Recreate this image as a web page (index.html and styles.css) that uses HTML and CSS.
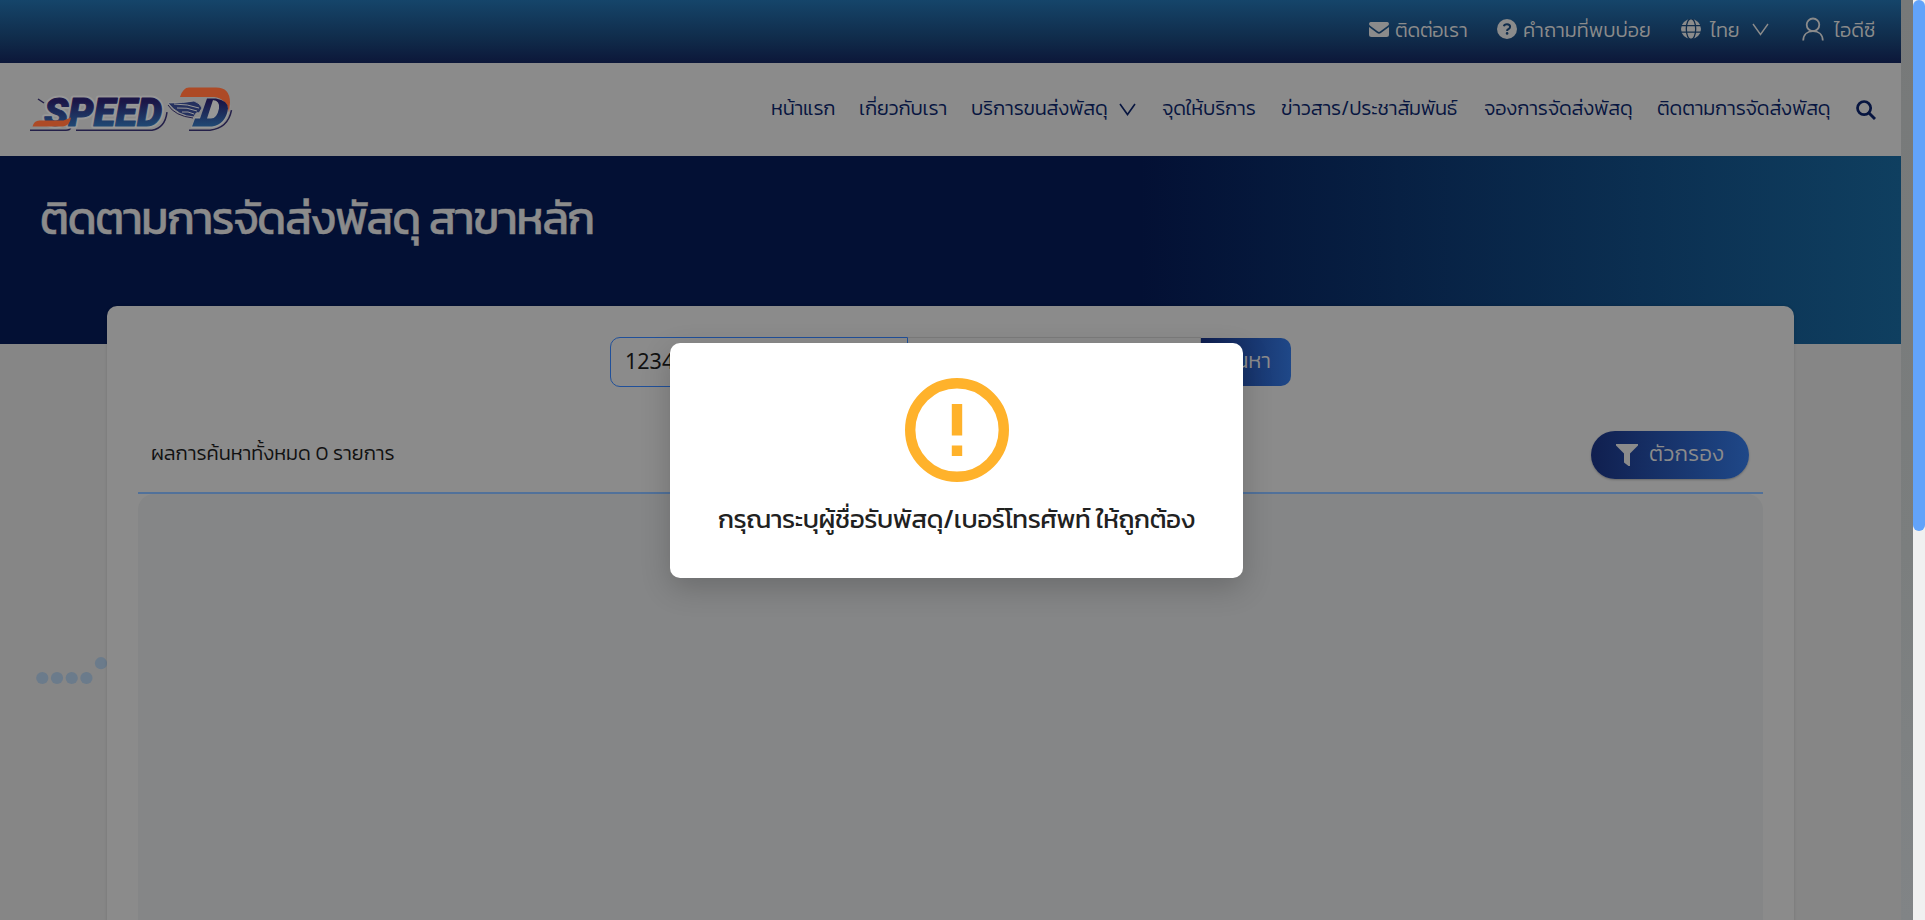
FILE: index.html
```html
<!DOCTYPE html>
<html lang="th">
<head>
<meta charset="utf-8">
<title>SPEED-D</title>
<link rel="stylesheet" href="styles.css">
</head>
<body>
<div class="window">
  <div class="page">
    <header class="topbar">
      <a class="top-item top-contact"><svg class="icon-mail" viewBox="0 0 20 15"><path fill="#8b8b8b" d="M1.9 0h16.2A1.9 1.9 0 0 1 19.2 3.400L11.100 9.500a1.900 1.900 0 0 1-2.200 0L.8 3.400A1.900 1.900 0 0 1 1.900 0zM0 5v7.500A2.500 2.500 0 0 0 2.500 15h15a2.500 2.500 0 0 0 2.500-2.500V5l-8.100 6a3.100 3.100 0 0 1-3.800 0z"/></svg><span class="label l-contact">ติดต่อเรา</span></a>
      <a class="top-item top-faq"><svg class="icon-20" viewBox="0 0 20 20"><circle cx="10" cy="10" r="10" fill="#8b8b8b"/><path d="M6.900 7.300C7.200 5.800 8.300 5.300 10 5.300c1.900 0 3.100 1 3.100 2.500 0 1.700-1.400 2-2.200 2.600-.6.400-.8.800-.8 1.500" fill="none" stroke="#102c4b" stroke-width="2"/><circle cx="10.100" cy="14.400" r="1.300" fill="#102c4b"/></svg><span class="label l-faq">คำถามที่พบบ่อย</span></a>
      <a class="top-item top-lang"><svg class="icon-20" viewBox="0 0 20 20"><circle cx="10" cy="10" r="10" fill="#8b8b8b"/><g fill="none" stroke="#102c4b" stroke-width="1.300"><ellipse cx="10" cy="10" rx="4.700" ry="10.500"/><path d="M0 6.700h20M0 13.200h20"/></g></svg><span class="label l-lang">ไทย</span><svg class="icon-chev" viewBox="0 0 17 13"><path d="M1 1l7.500 10.500L16 1" fill="none" stroke="#8b8b8b" stroke-width="1.400"/></svg></a>
      <a class="top-item top-user"><svg class="icon-user" viewBox="0 0 22 24"><g fill="none" stroke="#8b8b8b" stroke-width="1.800"><circle cx="11" cy="7.800" r="6.300"/><path d="M1.200 23.500C1.400 17.500 5.500 14.200 11 14.200s9.600 3.300 9.800 9.300"/></g></svg><span class="label l-user">ไอดีซี</span></a>
    </header>
    <nav class="nav">
      <svg class="logo" viewBox="0 0 240 70">
        <defs>
          <linearGradient id="ink" gradientUnits="userSpaceOnUse" x1="0" y1="22" x2="0" y2="52"><stop offset=".15" stop-color="#1b1647"/><stop offset="1" stop-color="#204a75"/></linearGradient>
        </defs>
        <path d="M20 55.200h36q4 0 5-3M66 55.200h76q13-2 15-18" fill="none" stroke="#242049" stroke-width="1.500"/>
        <g class="logo-word" stroke-linejoin="round">
          <text x="34" y="51" textLength="118" lengthAdjust="spacingAndGlyphs" fill="#979797" stroke="#979797" stroke-width="5">SPEED</text>
          <text x="34" y="51" textLength="118" lengthAdjust="spacingAndGlyphs" fill="url(#ink)" stroke="url(#ink)" stroke-width="1">SPEED</text>
        </g>
        <path d="M28 24l6 4" stroke="#242049" stroke-width="1.500"/>
        <path d="M22.500 51.500q1.500-6 7-6h24l7.500-3q-1 8-8 9z" fill="#ad4a26"/>
        <path d="M181 53h18q18 0 21.500-22l-1.500-5h-20l-9 16h-5z" fill="#979797"/>
        <path d="M179 55.200h21q18-2 21.500-20" fill="none" stroke="#242049" stroke-width="1.500"/>
        <path d="M170 22q3-9.500 9-9.500h27q14 0 14 15l-1 10q-2-14-15-15.500z" fill="#ad4a26"/>
        <path d="M197 23.500h9q12 2 12 10-2 15.500-16 18h-20l3-8h5zM203 25l-6 18.500h4q6 0 8-10 1-8-6-8.500z" fill="url(#ink)" fill-rule="evenodd"/>
        <path d="M158 28q16 0 26-2 6 2 8 7l-3 5q-3-2-5 4-16-1-26-14z" fill="#25315f" stroke="#979797" stroke-width=".8"/>
        <path d="M164 29q14 0 25 4M167 33q10-1 20 3M172 37q6-1 12 2" fill="none" stroke="#979797" stroke-width="1"/>
        <path d="M158 30q7 11 25 13" fill="none" stroke="#242049" stroke-width="1"/>
      </svg>
      <div class="menu">
        <a class="label m1">หน้าแรก</a><a class="label m2">เกี่ยวกับเรา</a>
        <a class="drop"><span class="label m3">บริการขนส่งพัสดุ</span><svg class="icon-chev" viewBox="0 0 17 13"><path d="M1 1l7.500 10.500L16 1" fill="none" stroke="#071540" stroke-width="1.600"/></svg></a>
        <a class="label m4">จุดให้บริการ</a><a class="label m5">ข่าวสาร/ประชาสัมพันธ์</a><a class="label m6">จองการจัดส่งพัสดุ</a><a class="label m7">ติดตามการจัดส่งพัสดุ</a>
        <svg class="icon-20" viewBox="0 0 20 20"><circle cx="8.100" cy="8.100" r="6.600" fill="none" stroke="#071540" stroke-width="2.700"/><path d="M13 13l6 6" stroke="#071540" stroke-width="2.900"/></svg>
      </div>
    </nav>
    <section class="hero"><h1 class="label title">ติดตามการจัดส่งพัสดุ สาขาหลัก</h1></section>
    <svg class="dots" viewBox="0 0 72 28" fill="#6b7b8b"><circle cx="6.300" cy="21" r="6.100"/><circle cx="21" cy="21" r="6.100"/><circle cx="35.700" cy="21" r="6.100"/><circle cx="50.400" cy="21" r="6.100"/><circle cx="65" cy="6.200" r="6.100"/></svg>
    <main class="card">
      <div class="search">
        <div class="field active">1234</div>
        <div class="field phone"></div>
        <div class="find"><span class="label l-find">ค้นหา</span></div>
      </div>
      <div class="result-head">
        <span class="label l-result">ผลการค้นหาทั้งหมด 0 รายการ</span>
        <div class="filter"><svg class="icon-filter" viewBox="0 0 22 22"><path d="M0 0h22v1.500L14 9.500V22h-1.500L8 18.500v-9L0 1.500z" fill="#8b8b8b"/></svg><span class="label l-filter">ตัวกรอง</span></div>
      </div>
      <div class="panel"></div>
    </main>
  </div>
  <div class="inner-scroll"></div>
  <div class="scroll"><div class="thumb"></div></div>
</div>
<div class="modal">
  <svg class="warn" viewBox="0 0 104 104"><circle cx="52" cy="52" r="46.800" fill="none" stroke="#ffb22b" stroke-width="10.400"/><path d="M46.800 26h10.400v31.500H46.800zM46.800 67.500h10.400V78H46.800z" fill="#ffb22b"/></svg>
  <p class="label l-modal">กรุณาระบุผู้ชื่อรับพัสดุ/เบอร์โทรศัพท์ ให้ถูกต้อง</p>
</div>
</body>
</html>
```
FILE: styles.css
```css
* { box-sizing: border-box; }
body { margin: 0; overflow: hidden; font-family: "Kanit", "Prompt", "Noto Sans Thai", "Noto Sans", "Open Sans", sans-serif; font-weight: 300; color: #111; }
svg { display: block; flex: none; }
.window { display: flex; width: 1925px; height: 920px; overflow: hidden; }
.page { position: relative; width: 1901px; height: 920px; background: #868686; overflow: hidden; }
.label { display: block; white-space: nowrap; flex: none; line-height: 30px; }
.topbar { height: 63px; background: linear-gradient(#15456a, #102c4b 60%, #0c1739); display: flex; justify-content: flex-end; padding: 14px 26px 0 0; color: #8b8b8b; font-size: 20px; }
.top-item { display: flex; align-items: center; height: 30px; }
.top-item .label { padding-top: 1px; }
.top-contact, .top-faq { gap: 6px; margin-right: 30px; }
.top-lang { gap: 9px; margin-right: 33px; }
.top-lang .icon-chev { margin-left: 4px; }
.top-user { gap: 10px; }
.icon-mail { width: 20px; height: 15px; }
.icon-20 { width: 20px; height: 20px; }
.icon-chev { width: 17px; height: 13px; }
.icon-user { width: 22px; height: 24px; }
.icon-filter { width: 22px; height: 22px; }
.l-contact { width: 72px; letter-spacing: -.3px; }
.l-faq { width: 128px; }
.l-lang { width: 29px; }
.l-user { width: 41px; }
.nav { height: 93px; background: #8b8b8b; display: flex; justify-content: space-between; align-items: center; padding: 0 25px 0 10px; color: #071540; font-size: 20px; }
.logo { width: 240px; height: 70px; }
.logo-word { font: italic 900 39px Roboto, sans-serif; }
.menu { display: flex; align-items: center; gap: 26px; letter-spacing: -.17px; }
.menu .label { padding-bottom: 3px; }
.drop { display: flex; align-items: center; gap: 13px; }
.m1 { width: 62px; } .m2 { width: 86px; } .m3 { width: 135px; } .m4 { width: 93px; }
.m5 { width: 177px; } .m6 { width: 147px; } .m7 { width: 173px; }
.hero { height: 188px; padding: 32px 0 0 40px; background: linear-gradient(90deg, #031034 60%, #0f3f60); color: #8b8b8b; }
.title { margin: 0; font-size: 45px; line-height: 60px; font-weight: 400; letter-spacing: -1.380px; -webkit-text-stroke: .5px #8b8b8b; }
.dots { position: absolute; left: 36px; top: 657px; width: 72px; height: 28px; }
.card { position: absolute; left: 107px; top: 306px; width: 1687px; height: 640px; border-radius: 10px; background: #8b8b8b; padding: 31px 31px 0; box-shadow: 0 0 3px rgba(0,0,0,.15); }
.search { display: flex; margin: 0 auto 0 472px; width: 681px; height: 50px; }
.field { font-family: "Noto Sans", "Open Sans", sans-serif; font-size: 21.500px; font-weight: 400; line-height: 46px; }
.active { width: 298px; border: 1px solid #20509a; border-radius: 10px 0 0 10px; padding-left: 14px; }
.phone { width: 293px; border: 1px solid #7c7c7c; border-left: 0; }
.find { width: 90px; height: 48px; margin-top: 1px; border-radius: 0 10px 10px 0; background: linear-gradient(90deg, #0f1f50, #1f4888); display: flex; align-items: center; justify-content: flex-end; padding: 0 20px 2px 0; color: #8b8b8b; font-size: 22px; }
.result-head { height: 107px; display: flex; justify-content: space-between; align-items: flex-start; border-bottom: 2px solid #51719a; padding: 44px 14px 0 13px; font-size: 20px; }
.l-result { width: 243px; line-height: 45px; }
.filter { width: 158px; height: 48px; border-radius: 24px; background: linear-gradient(90deg, #101f4f, #1f4888); display: flex; align-items: center; gap: 11px; padding-left: 25px; color: #8b8b8b; font-size: 22px; box-shadow: 0 1px 2px rgba(0,0,0,.25); }
.l-filter { margin-top: -3px; letter-spacing: .2px; }
.panel { height: 460px; border-radius: 16px 16px 0 0; background: #858687; }
.inner-scroll { width: 12px; background: linear-gradient(#777979, #7b7e7e 60%, #818486); }
.scroll { width: 12px; background: #f0f0f0; }
.thumb { height: 531px; border-radius: 6px; background: #62a3fa; }
.modal { position: absolute; left: 670px; top: 343px; width: 573px; height: 235px; border-radius: 10px; background: #fff; box-shadow: 0 10px 30px rgba(0,0,0,.2); display: flex; flex-direction: column; align-items: center; padding-top: 35px; }
.warn { width: 104px; height: 104px; }
.l-modal { margin: 17px 0 0; font-size: 26px; line-height: 40px; font-weight: 400; letter-spacing: -.38px; color: #212121; }
```
